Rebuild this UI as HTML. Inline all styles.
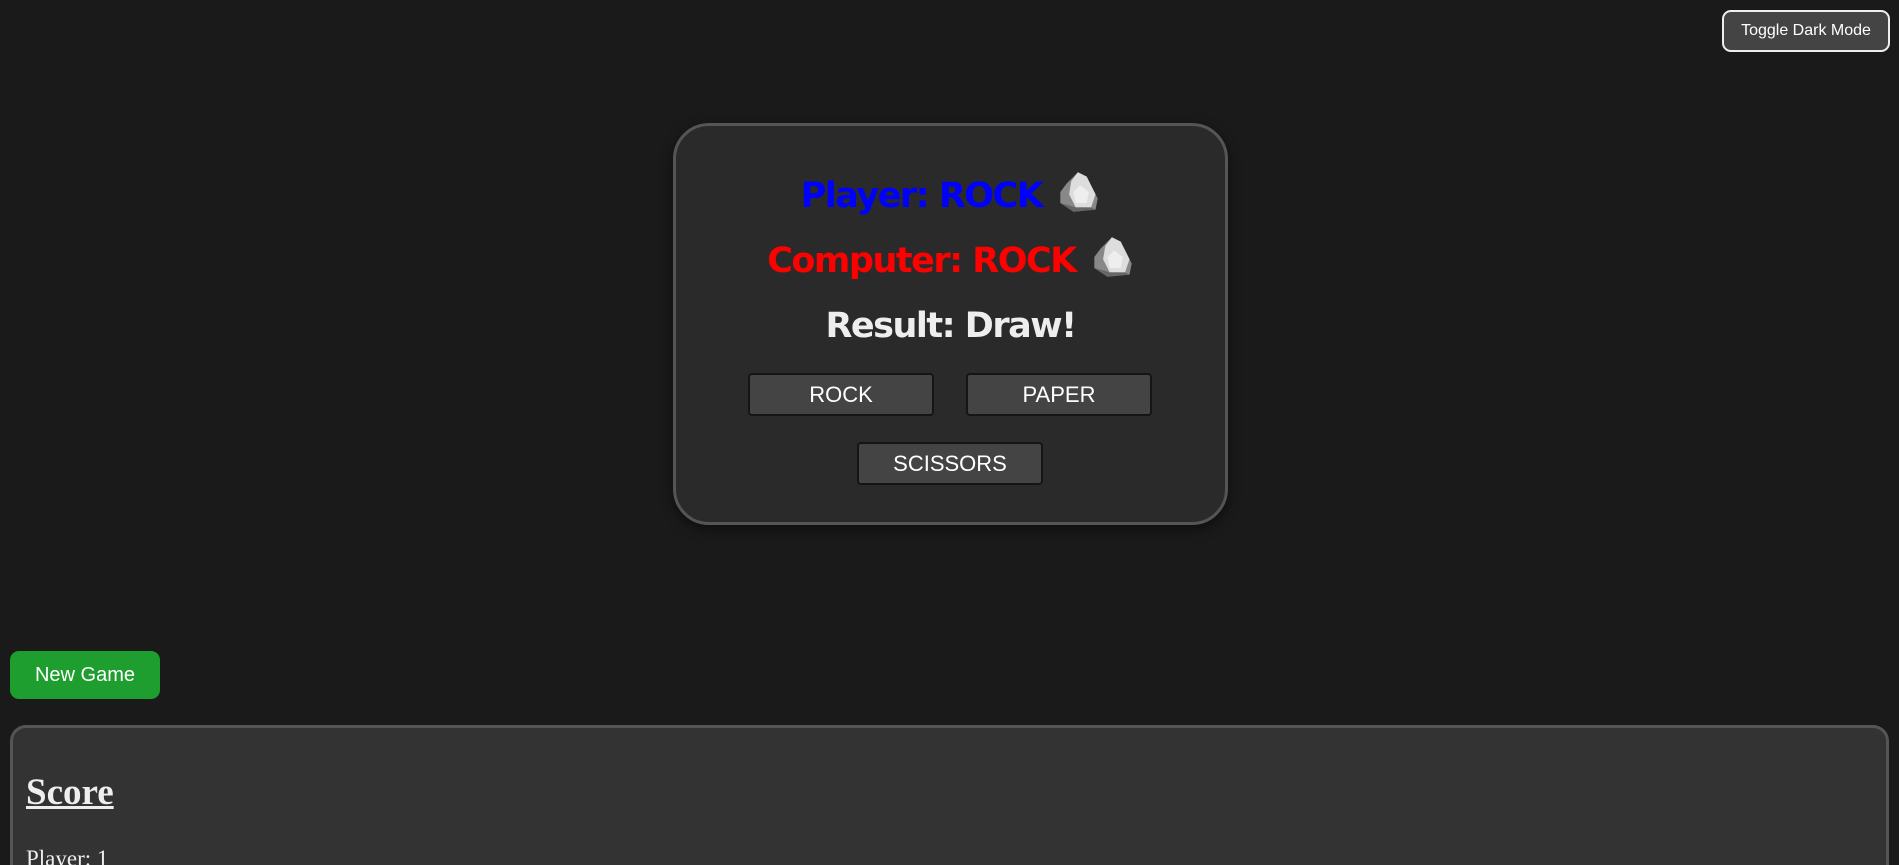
<!DOCTYPE html>
<html style="overflow:hidden;height:865px"><head><style>
body{margin:0;background:#1a1a1a;width:1899px;height:865px;overflow:hidden;position:relative;font-family:"Liberation Sans",sans-serif;}
.tog{position:absolute;left:1722px;top:10px;width:168px;height:42px;box-sizing:border-box;border:2px solid #eee;border-radius:9px;background:#444;color:#fff;font-size:16px;display:flex;align-items:center;justify-content:center;}
.card{position:absolute;left:673px;top:123px;width:555px;height:402px;box-sizing:border-box;border:3px solid #555;border-radius:36px;background:#2a2a2a;box-shadow:0 4px 12px rgba(0,0,0,.5);}
.line{position:absolute;left:0;width:549px;text-align:center;font-weight:bold;font-size:35px;font-family:"DejaVu Sans","Liberation Sans",sans-serif;letter-spacing:-1.5px;line-height:44px;}
.line svg{vertical-align:-7px;margin-left:16px}
.btn{position:absolute;width:186px;height:43px;box-sizing:border-box;background:#444;border:2px solid #151515;border-radius:4px;color:#fff;font-size:22px;display:flex;align-items:center;justify-content:center;}
.ng{position:absolute;left:10px;top:651px;width:150px;height:48px;background:#1e9e2e;border-radius:9px;color:#fff;font-size:20px;display:flex;align-items:center;justify-content:center;}
.score{position:absolute;left:10px;top:725px;width:1879px;height:140px;box-sizing:border-box;border:3px solid #555;border-bottom:none;border-radius:16px 16px 0 0;background:#333;color:#eee;font-family:"Liberation Serif",serif;}
.score h2{position:absolute;left:13px;top:43px;margin:0;font-size:37px;text-decoration:underline;}
.score p{position:absolute;left:13px;top:118px;margin:0;font-size:23px;}
</style></head><body>
<div class="card">
<div class="line" style="top:44px;color:#0000ff">Player: ROCK<svg width="42" height="44" viewBox="0 0 38 40"><polygon points="8,12 18,2 26,6 36,26 34,36 14,38 2,30 2,20" fill="#888"/><polygon points="18,2 26,6 34,22 30,34 16,34 10,22 12,10" fill="#ddd"/><polygon points="20,14 28,20 26,30 16,30 14,20" fill="#eee"/><polygon points="2,30 14,38 34,36 30,34 16,34" fill="#666"/></svg></div>
<div class="line" style="top:109px;color:#ff0000">Computer: ROCK<svg width="42" height="44" viewBox="0 0 38 40"><polygon points="8,12 18,2 26,6 36,26 34,36 14,38 2,30 2,20" fill="#888"/><polygon points="18,2 26,6 34,22 30,34 16,34 10,22 12,10" fill="#ddd"/><polygon points="20,14 28,20 26,30 16,30 14,20" fill="#eee"/><polygon points="2,30 14,38 34,36 30,34 16,34" fill="#666"/></svg></div>
<div class="line" style="top:178px;color:#eee">Result: Draw!</div>
<div class="btn" style="left:72px;top:247px">ROCK</div>
<div class="btn" style="left:290px;top:247px">PAPER</div>
<div class="btn" style="left:181px;top:316px">SCISSORS</div>
</div>
<div class="tog">Toggle Dark Mode</div>
<div class="ng">New Game</div>
<div class="score"><h2>Score</h2><p>Player: 1</p></div>
</body></html>
